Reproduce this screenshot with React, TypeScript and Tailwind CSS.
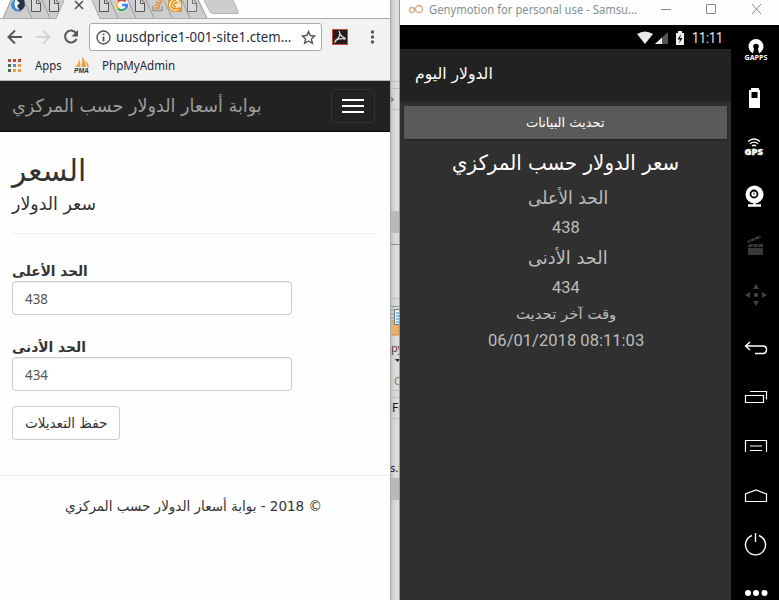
import { useLayoutEffect, useRef, useState, type ReactNode } from "react";

/* A single line of text squeezed or stretched to the width of its box. */
function Fit({ className, children }: { className: string; children: ReactNode }) {
  const box = useRef<HTMLSpanElement>(null);
  const inner = useRef<HTMLSpanElement>(null);
  const [scale, setScale] = useState(1);
  useLayoutEffect(() => {
    if (box.current && inner.current) setScale(box.current.offsetWidth / inner.current.offsetWidth);
  }, []);
  return (
    <span ref={box} className={`block shrink-0 whitespace-nowrap ${className}`}>
      <span ref={inner} className="inline-block origin-left" style={{ transform: `scaleX(${scale})` }}>
        {children}
      </span>
    </span>
  );
}

const AR = "font-['DejaVu_Sans',sans-serif]";
const UI = "font-['Noto_Sans',sans-serif]";

function TabStrip() {
  return (
    <svg className="block h-[19px] w-[390px]" viewBox="0 0 390 19">
      <rect width="390" height="19" fill="#fefefe" />
      <path d="M12-2H198L207 18.500H3Z" fill="#cdcdcd" />
      <path d="M0 18.500H390" stroke="#acacac" />
      <g fill="#cdcdcd" stroke="#999">
        <path d="M3 18L12-2M23-2L32 18M41-2L50 18M109-2L118 18M127-2L136 18M145-2L154 18M163-2L172 18M181-2L190 18M197-2L207 18" fill="none" />
        <path d="M203-2L209 10Q210 13.500 213 13.500H238Q239 13 237 9L232-2Z" stroke="#b5b5b5" />
      </g>
      <path d="M56 19L65-2H91L100 19Z" fill="#f1f1f1" />
      <path d="M56 18.500L65-2M91-2L100 18.500" stroke="#aaa" fill="none" />
      <path d="M75 1L83 9M83 1L75 9" stroke="#4c4c4c" strokeWidth="1.500" />
      <path d="M12-1H24L25 6Q23 10 20 11L16 7L20 3L17 0Z" fill="#233246" />
      <path d="M16-1Q9 2 12 8Q15 13 22 11Q16 10 15 7Q14 3 16-1Z" fill="#368bd2" />
      <path d="M16-1Q13 4 16 8L20 10L17 6L19 3L17 1Z" fill="#edf3f6" />
      <g fill="#dadada" stroke="#555">
        <path d="M31.500-2V11.500H40.500V3L37-1M36.500-2V3.500H40" />
        <path d="M49.500-2V11.500H58.500V3L55-1M54.500-2V3.500H58" />
        <path d="M99.500-2V11.500H108.500V3L105-1M104.500-2V3.500H108" />
        <path d="M135.500-2V11.500H144.500V3L141-1M140.500-2V3.500H144" />
        <path d="M187.500-2V11.500H196.500V3L193-1M192.500-2V3.500H196" stroke="#68737c" />
      </g>
      <circle cx="122" cy="5" r="7" fill="#f8f8f8" />
      <g fill="none" strokeWidth="2.400">
        <path d="M118 1.500A5 5 0 0 1 125.500 1.500" stroke="#e44a3d" />
        <path d="M118 1.500A5 5 0 0 0 118 8.500" stroke="#f2b52a" />
        <path d="M118 8.500A5 5 0 0 0 125 9" stroke="#40a759" />
        <path d="M122 5H127Q127 8 125 9" stroke="#4384ec" />
      </g>
      <g fill="none" strokeWidth="1.500">
        <path d="M153 6V10.500H162V6" stroke="#999" />
        <path d="M155 8H160M155 5L160 6M156 2L161 4M159-1L162 3" stroke="#e78a33" />
      </g>
      <path d="M168-1H182V12H172L168 8Z" fill="#df962f" />
      <circle cx="175" cy="5" r="5.500" fill="#ffe9bc" stroke="#fff3d8" />
      <path d="M176 0C170 1 170 9 175 9L180 8M178 3C174 1 172 7 176 7" fill="none" stroke="#e49323" strokeWidth="1.500" />
    </svg>
  );
}

function Toolbar() {
  return (
    <div className="h-[62px] border-b border-[#b6b9b8] bg-[#f2f2f2]">
      <div className="flex h-[34px] items-center pt-0.5">
        <svg className="h-9 w-[89px] shrink-0" viewBox="0 19 89 36" fill="none" strokeWidth="2">
          <path d="M22 37H9M15 30.500L8.500 37L15 43.500" stroke="#555" />
          <path d="M36 37H49M43 30.500L49.500 37L43 43.500" stroke="#d4d4d4" />
          <path d="M76 33A6 6 0 1 0 76.500 39" stroke="#555" />
          <path d="M78 30V36.500H71.500Z" fill="#555" />
        </svg>
        <div className="flex h-7 w-[233px] items-center rounded-[3px] border border-[#aaa] bg-white">
          <svg className="ml-1.5 size-[15px]" viewBox="0 0 15 15" fill="none" stroke="#555">
            <circle cx="7.500" cy="7.500" r="6.500" strokeWidth="1.400" />
            <path d="M7.500 6.500V11.500M7.500 3.500V5" strokeWidth="1.800" />
          </svg>
          <Fit className={`${UI} ml-[5px] w-[175px] text-[14px] leading-5 text-[#282c38]`}>uusdprice1-001-site1.ctem...</Fit>
          <svg className="ml-[10px] size-[15px]" viewBox="0 0 15 15">
            <path d="M7.500 1.500L9.300 5.500L13.700 6L10.400 8.900L11.400 13.300L7.500 11L3.600 13.300L4.600 8.900L1.300 6L5.700 5.500Z" fill="none" stroke="#555" strokeWidth="1.400" />
          </svg>
        </div>
        <svg className="ml-[10px] size-4" viewBox="0 0 16 16">
          <rect x=".5" y=".5" width="15" height="15" fill="#211c1d" stroke="#c54b34" />
          <path d="M7 2C9 5 7 9 3 13C3 10 9 9 13 10C14 8 9 10 7 2Z" fill="none" stroke="#d4d0cc" strokeWidth="1.300" />
        </svg>
        <svg className="ml-[22px] h-4 w-1.5" viewBox="0 0 6 16" fill="#555">
          <circle cx="2.500" cy="3" r="1.700" /><circle cx="2.500" cy="8" r="1.700" /><circle cx="2.500" cy="13" r="1.700" />
        </svg>
      </div>
      <div className={`${UI} flex h-6 items-center text-[13px] leading-5 text-[#222733]`}>
        <svg className="ml-2 size-[13px] shrink-0" viewBox="0 0 13 13">
          <path d="M0 0H3V3H0ZM5 0H8V3H5ZM10 0H13V3H10Z" fill="#bd4939" />
          <path d="M0 5H3V8H0ZM0 10H3V13H0Z" fill="#4d6b55" />
          <path d="M5 5H8V8H5Z" fill="#4d93d1" />
          <path d="M10 5H13V8H10ZM5 10H8V13H5ZM10 10H13V13H10Z" fill="#e8a044" />
        </svg>
        <Fit className="ml-[14px] w-[27px]">Apps</Fit>
        <svg className="ml-[12px] h-4 w-4 shrink-0" viewBox="0 0 16 16">
          <path d="M1 10Q5 7 5 2Q7 5 6 10ZM7 10Q9 5 8 0Q12 4 12 10ZM12 3Q14 6 15 10H13Z" fill="#e9a24b" />
          <text x="0" y="15.500" fontFamily="Liberation Sans" fontWeight="bold" fontStyle="italic" fontSize="6.500" textLength="15" lengthAdjust="spacingAndGlyphs" fill="#333">PMA</text>
        </svg>
        <Fit className="ml-[12px] w-[73px]">PhpMyAdmin</Fit>
      </div>
    </div>
  );
}

function Field({ label, value, labelClass }: { label: string; value: string; labelClass: string }) {
  return (
    <div>
      <Fit className={`${AR} h-5 text-[14px] leading-5 font-bold text-[#333] ${labelClass}`}>{label}</Fit>
      <div className={`${UI} flex h-[34px] w-[280px] items-center rounded border border-[#ccc] bg-white px-3 text-[14px] text-[#555] shadow-[inset_0_1px_1px_rgba(0,0,0,0.075)]`}>
        <Fit className="w-[23px]">{value}</Fit>
      </div>
    </div>
  );
}

function Browser() {
  return (
    <div className="h-[600px] w-[390px] shrink-0 overflow-hidden bg-[#fefefe]">
      <TabStrip />
      <Toolbar />
      <div className="flex h-[51px] items-center justify-between border-b border-[#080808] bg-[#222] pr-[15px] pl-3">
        <Fit className={`${AR} w-[250px] text-[18px] leading-6 text-[#9d9d9d]`}>بوابة أسعار الدولار حسب المركزي</Fit>
        <div className="flex h-[34px] w-11 flex-col items-center justify-center gap-1 rounded border border-[#333]">
          <i className="h-0.5 w-[22px] bg-white" /><i className="h-0.5 w-[22px] bg-white" /><i className="h-0.5 w-[22px] bg-white" />
        </div>
      </div>
      <div className="h-[343px] pt-[18px] pl-3 text-[#333]">
        <Fit className={`${AR} h-[42px] w-[74px] text-[30px] leading-[42px]`}>السعر</Fit>
        <Fit className={`${AR} h-6 w-[84px] text-[18px] leading-6`}>سعر الدولار</Fit>
        <div className="mt-[17px] mb-[27px] w-[363px] border-t border-[#eee]" />
        <div className="space-y-[22px]">
          <Field label="الحد الأعلى" value="438" labelClass="w-[76px]" />
          <Field label="الحد الأدنى" value="434" labelClass="w-[74px]" />
        </div>
        <div className="mt-[15px] flex h-[34px] w-[108px] items-center rounded border border-[#ccc] bg-white px-3">
          <Fit className={`${AR} w-[82px] text-[14px] leading-5`}>حفظ التعديلات</Fit>
        </div>
      </div>
      <div className="border-t border-[#eee] pt-[20px] pl-[65px]">
        <Fit className={`${AR} w-[257px] text-[14px] leading-5 text-[#333]`}>
          <span dir="rtl" className="inline-block">© 2018 - بوابة أسعار الدولار حسب المركزي</span>
        </Fit>
      </div>
    </div>
  );
}

/* The sliver of the windows that show between the two foreground ones. */
function Gap() {
  return (
    <svg className="h-[600px] w-[10px] shrink-0" viewBox="0 0 10 600" fontFamily="Noto Sans">
      <defs>
        <linearGradient id="edge"><stop stopColor="#bebebe" /><stop offset=".5" stopColor="#dadada" /><stop offset="1" stopColor="#dedede" /></linearGradient>
      </defs>
      <rect width="10" height="600" fill="url(#edge)" />
      <path d="M0 81.500H10M0 88.500H10M0 109.500H10M0 298.500H10M0 390.500H10M0 397.500H10M0 418.500H10" stroke="#bcbcbc" />
      <path d="M0 97L3 99.500L0 102" fill="none" stroke="#777" strokeWidth="1.500" />
      <path d="M0 211H10V233H0ZM0 478H10V500H0Z" fill="#b9b9b9" />
      <path d="M0 244.500H10" stroke="#888" />
      <path d="M0 306.500H9M0 310H4M0 314H4M0 318H4" stroke="#8c969d" />
      <rect x="0" y="321" width="9" height="14" fill="#eab16c" stroke="#cc9347" />
      <path d="M4.500 309.500H10V324.500H4.500Z" fill="#e8f3fa" stroke="#68747d" />
      <path d="M6 313H10M6 316H10M6 319H10M6 322H10" stroke="#2c8cd2" />
      <text x="1" y="352" fontSize="11" fill="#643747">py</text>
      <path d="M5 359H10L7.500 362Z" fill="#222" />
      <text x="4" y="385" fontSize="11" fill="#777">C</text>
      <text x="2" y="412" fontSize="12" fill="#111">Fo</text>
      <text x="0" y="472" fontSize="11" fill="#111">s.f</text>
      <path d="M.5 0V600" stroke="#a8a8a8" /><path d="M9.500 0V600" stroke="#999" />
    </svg>
  );
}

function SideBar() {
  return (
    <svg className="h-[575px] w-12 shrink-0 bg-black" viewBox="731 25 48 575" fill="none" stroke="#fff">
      <circle cx="756" cy="46.500" r="7.500" fill="#fff" stroke="none" />
      <circle cx="756" cy="46.500" r="2.800" fill="#000" stroke="none" />
      <path d="M755 47H757L759 55H753Z" fill="#000" stroke="#000" />
      <text x="744.500" y="59.500" fontFamily="Open Sans" fontWeight="bold" fontSize="7" textLength="23" lengthAdjust="spacingAndGlyphs" fill="#fff" stroke="none">GAPPS</text>
      <path fillRule="evenodd" d="M751 88H759V90H760V108H749V90H751ZM751.500 92V98H757.500V92Z" fill="#fff" stroke="none" />
      <path d="M748 141.500Q754 136.500 760 141.500M750 143.800Q754 140.500 758 143.800M752 146Q754 144.500 756 146" strokeWidth="1.400" />
      <text x="744.500" y="154.500" fontFamily="Open Sans" fontWeight="800" fontSize="8" textLength="18.500" lengthAdjust="spacingAndGlyphs" fill="#fff" stroke="#fff" strokeWidth=".3">GPS</text>
      <circle cx="754.500" cy="194.500" r="9" fill="#fff" stroke="none" />
      <circle cx="754" cy="194" r="3.500" stroke="#000" strokeWidth="1.800" />
      <path d="M754 194.500V192.500" stroke="#000" />
      <path d="M748 205.500H761M754.500 202V205" strokeWidth="2.500" />
      <path d="M748 244H763V255H748ZM747 241L760 235L761 238L748 243Z" fill="#393939" stroke="none" />
      <path d="M749 239L751 242M754 237L756 240M758 235L760 238M749 244L747 247M754 244L752 247M759 244L757 247M748 247.500H763" stroke="#050505" />
      <path d="M753 289L756 284L759 289ZM753 301H759L756 306ZM750 292V298L745 295ZM762 292V298L767 295Z" fill="#414141" stroke="none" />
      <circle cx="756" cy="295" r="2.200" fill="#414141" stroke="none" />
      <path d="M750 342L745.500 346L750 350M746 346H763Q766.500 346 766.500 349.500Q766.500 353.500 763 353.500H755" strokeWidth="1.400" />
      <path d="M745.500 395.500H763.500V402.500H745.500ZM750 391.500H766.500V399.500" strokeWidth="1.200" />
      <path d="M745.500 452V440.500H766.500V452M750 446H762M750 450.500H762" strokeWidth="1.200" />
      <path d="M745.500 501.500V494L756 490L766.500 494V501.500Z" strokeWidth="1.200" />
      <path d="M752 535.500A10 10 0 1 0 759 535.500M755.500 533V542" strokeWidth="1.400" />
      <g fill="#fff" stroke="none"><circle cx="748" cy="593" r="3" /><circle cx="756" cy="593" r="3" /><circle cx="764.500" cy="593" r="3" /></g>
    </svg>
  );
}

function Emulator() {
  return (
    <div className="flex h-[600px] w-[379px] flex-col overflow-hidden">
      <div className="flex h-[25px] shrink-0 items-start bg-[#fefefe]">
        <svg className="ml-2 h-5 w-4" viewBox="408 0 16 20" fill="none" stroke="#daaa83" strokeWidth="1.300"><circle cx="412" cy="10" r="2.500" /><circle cx="419" cy="9" r="3.500" /></svg>
        <Fit className={`${UI} ml-[5px] w-[208px] text-[12px] leading-5 text-[#84918f]`}>Genymotion for personal use - Samsu...</Fit>
        <svg className="h-5 w-[142px]" viewBox="637 0 142 20" fill="none" stroke="#888"><path d="M661 9.500H671M706.500 4.500H715.500V13.500H706.500ZM752 4L761 14M761 4L752 14" /></svg>
      </div>
      <div className="flex flex-1">
        <div className="w-[331px] bg-[#303030]">
          <div className="flex h-6 items-center bg-black">
            <svg className="ml-[236px] h-6 w-[53px]" viewBox="636 25 53 24">
              <path d="M637 34Q645 29 653 34L645 44Z" fill="#e8e8e8" />
              <path d="M668 32V44H655Z" fill="#555" /><path d="M662 37.500V44H655Z" fill="#eee" />
              <path d="M678 31H682V33H684V45H676V33H678Z" fill="#eee" />
              <path d="M681 34L677.500 39.500H680L679 43.500L682.500 38H680Z" fill="#111" />
            </svg>
            <Fit className="ml-[3px] w-[31px] pt-0.5 font-[Roboto,sans-serif] text-[14px] leading-5 text-[#e8e8e8]">11:11</Fit>
          </div>
          <div className="h-[52px] bg-[#222] pt-[13px] pl-[15px] shadow-[0_1px_2px_rgba(0,0,0,0.3)]">
            <Fit className={`${AR} w-[78px] text-[16px] leading-6 text-white`}>الدولار اليوم</Fit>
          </div>
          <div className="mt-[5px] ml-1 flex h-[33px] w-[323px] items-center justify-center bg-[#5a5a5a] shadow-[0_1px_2px_rgba(0,0,0,0.4)]">
            <Fit className={`${AR} w-[79px] text-[13px] leading-5 text-white`}>تحديث البيانات</Fit>
          </div>
          <div className="flex flex-col items-center pt-[6px] text-[#bdbdbd]">
            <Fit className={`${AR} h-9 w-[227px] text-[21px] leading-9 text-white`}>سعر الدولار حسب المركزي</Fit>
            <Fit className={`${AR} ml-1 h-[31px] w-[80px] text-[18px] leading-[33px]`}>الحد الأعلى</Fit>
            <Fit className="h-[30px] w-[28px] font-[Roboto,sans-serif] text-[17px] leading-[30px]">438</Fit>
            <Fit className={`${AR} ml-1 h-[30px] w-[80px] text-[18px] leading-[31px]`}>الحد الأدنى</Fit>
            <Fit className="h-[30px] w-[28px] font-[Roboto,sans-serif] text-[17px] leading-[31px]">434</Fit>
            <Fit className={`${AR} h-[24px] w-[100px] text-[14px] leading-[24px]`}>وقت آخر تحديث</Fit>
            <Fit className="h-7 w-[156px] font-[Roboto,sans-serif] text-[17px] leading-7">06/01/2018 08:11:03</Fit>
          </div>
        </div>
        <SideBar />
      </div>
    </div>
  );
}

export default function App() {
  return (
    <div className="flex h-[600px] w-[779px] overflow-hidden bg-white">
      <Browser />
      <Gap />
      <Emulator />
    </div>
  );
}
